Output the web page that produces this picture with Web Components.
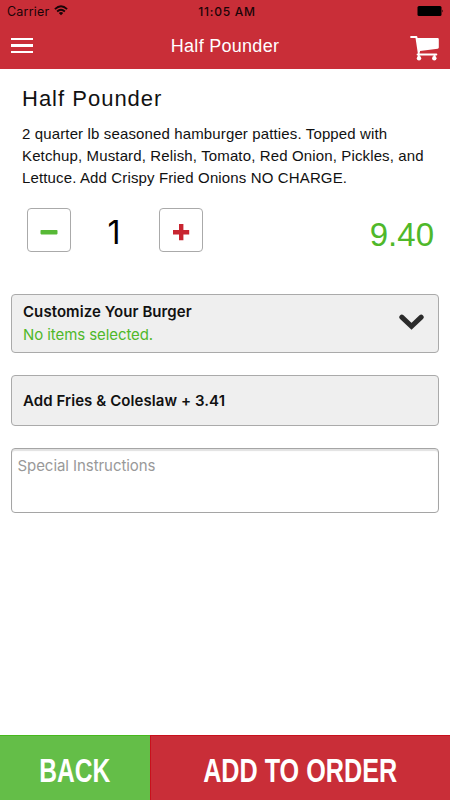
<!DOCTYPE html>
<html lang="en"><head><meta charset="utf-8"><title>Half Pounder</title>
<style>html,body{margin:0;height:100%;background:#fff}</style></head>
<body>
<order-screen></order-screen>
<script>
const define = (name, html) => customElements.define(name, class extends HTMLElement {
  constructor() {
    super();
    this.attachShadow({ mode: 'open' }).innerHTML = html;
  }
});

define('status-bar', `<style>
:host{display:grid;grid-template-columns:1fr auto 1fr;align-items:center;height:22px;padding:1px 6px 0 7px;box-sizing:border-box;font:12.5px/20px Inter,sans-serif;color:#190407}
.left{display:flex;align-items:center;gap:5px;letter-spacing:.2px}
.time{font-weight:500;font-size:12px;letter-spacing:.75px;padding-left:3px}
.left svg{margin-top:-2px}
.bat{justify-self:end;margin-top:-1px}
svg{display:block}
</style>
<div class="left"><span>Carrier</span>
<svg width="14" height="11" viewBox="0 0 14 11" fill="none" stroke="#190407" stroke-width="1.8"><path d="M.9 4.1Q7-1.6 13.1 4.1M3.1 6.5Q7 2.9 10.9 6.5"/><path d="M4.8 8Q7 6.1 9.2 8L7 10.3Z" fill="#190407" stroke="none"/></svg></div>
<span class="time">11:05 AM</span>
<svg class="bat" width="27" height="12" viewBox="0 0 27 12"><rect x=".5" y="1" width="24" height="10" rx="1.5" fill="#000"/><path d="M25.3 4.4q1.5 1.4 0 3z" fill="#000"/></svg>`);

define('nav-bar', `<style>
:host{display:grid;grid-template-columns:1fr auto 1fr;align-items:center;height:47px;padding:0 11px;color:#fff;font:18px/24px "Liberation Sans",sans-serif;letter-spacing:.28px}
.menu{display:grid;gap:4.4px;width:22px}
.menu i{height:2.2px;background:#fff}
.cart{justify-self:end;margin-top:4px}
svg{display:block}
</style>
<div class="menu"><i></i><i></i><i></i></div>
<slot></slot>
<svg class="cart" width="29" height="26" viewBox="0 0 29 26"><path d="M1.1 2.1H6.4L8.8 18.2" fill="none" stroke="#fff" stroke-width="2" stroke-linecap="round" stroke-linejoin="round"/><path d="M6.6 3.1H27.7Q28.8 3.1 28.8 4.2V12.6Q28.8 13.6 27.7 13.8L10 16.1V17.1H8.6Z" fill="#fff"/><path d="M7.6 19.5H26.3" fill="none" stroke="#fff" stroke-width="2" stroke-linecap="round"/><path d="M8.8 20v3M24.5 20v3" stroke="#fff" stroke-width="1.8"/><circle cx="9" cy="23.3" r="2.2" fill="#fff"/><circle cx="24.3" cy="23.3" r="2.2" fill="#fff"/></svg>`);

define('item-info', `<style>
:host{display:block;padding:17px 20px 0 22px;font-family:"Liberation Sans",sans-serif;color:#111}
h1{margin:0;font-weight:400;font-size:22px;line-height:26px;letter-spacing:1px}
p{margin:11px 0 0;font-size:15px;line-height:21.8px;letter-spacing:.135px;white-space:nowrap}
</style><h1><slot name="title"></slot></h1>
<p>2 quarter lb seasoned hamburger patties. Topped with<br>Ketchup, Mustard, Relish, Tomato, Red Onion, Pickles, and<br>Lettuce. Add Crispy Fried Onions NO CHARGE.</p>`);

define('step-button', `<style>
:host{display:grid;place-items:center;width:44px;height:44px;box-sizing:border-box;border:1px solid #aaa;border-radius:4px;background:#fff}
</style><slot></slot>`);

define('quantity-row', `<style>
:host{display:flex;align-items:center;padding:0 16px 0 27px;height:44px;margin-top:19.6px}
.n{box-sizing:border-box;width:88px;padding:7px 2px 0 0;text-align:center;font:32px/44px Inter,sans-serif;color:#000}
.price{margin-left:auto;font:33px/44px "Liberation Sans",sans-serif;color:#4fb82a;padding-top:11px}
svg{display:block;margin-top:4px}
</style>
<step-button><svg width="18" height="18"><rect x=".5" y="7" width="17" height="4.4" rx=".8" fill="#57b936"/></svg></step-button>
<span class="n">1</span>
<step-button><svg width="18" height="18"><path d="M7 1h4.4v6H17.2v4.4H11.4v5.8H7V11.4H1V7H7Z" fill="#c82530"/></svg></step-button>
<span class="price">9.40</span>`);

define('option-card', `<style>
:host{display:flex;align-items:center;justify-content:space-between;box-sizing:border-box;margin:0 11px;padding:0 14px 0 11px;border:1px solid #aaa;border-radius:4px;background:#efefef;font:15px/22.6px Inter,sans-serif;color:#111}
b{display:block;font-weight:600;letter-spacing:.07px}
::slotted([slot=note]){display:block;color:#4fb82a;letter-spacing:-.08px}
</style><div><b><slot></slot></b><slot name="note"></slot></div><slot name="icon"></slot>`);

define('instructions-box', `<style>
:host{display:block;box-sizing:border-box;height:65px;margin:22px 11px 0;padding:6px 5.5px;border:1px solid #a5a5a5;border-radius:4px;box-shadow:inset 0 2px 1px #e2e2e2;background:#fff;font:15px/22px Inter,sans-serif;letter-spacing:-.06px;color:#999}
</style><slot></slot>`);

define('action-button', `<style>
:host{display:grid;place-items:center;box-sizing:border-box;padding-top:5px;color:#fff;font:bold 33px/40px "Liberation Sans",sans-serif}
span{white-space:nowrap;transform:scaleX(var(--squeeze,.745))}
</style><span><slot></slot></span>`);

define('order-screen', `<style>
:host{display:flex;flex-direction:column;width:450px;height:800px;overflow:hidden;background:#fff}
header{background:#c92e38;height:69px}
footer{display:grid;grid-template-columns:150px 300px;height:65px;margin-top:auto}
.back{background:#64be48;border-top:1px solid #46b81c}
.add{background:#c92e38;border-top:1px solid #c8101c;border-left:1px solid #c8101c;--squeeze:.763}
.customize{height:59px;margin-top:42.4px}
.fries{height:51px;margin-top:22px}
</style>
<header><status-bar></status-bar><nav-bar><span>Half Pounder</span></nav-bar></header>
<item-info><span slot="title">Half Pounder</span></item-info>
<quantity-row></quantity-row>
<option-card class="customize">Customize Your Burger<span slot="note">No items selected.</span><svg slot="icon" width="25" height="17" viewBox="0 0 25 17" style="margin-top:-3px"><path d="M2.8 3.1 12.5 12.3 22.2 3.1" fill="none" stroke="#2b2b2b" stroke-width="5" stroke-linecap="round"/></svg></option-card>
<option-card class="fries">Add Fries &amp; Coleslaw + 3.41</option-card>
<instructions-box>Special Instructions</instructions-box>
<footer><action-button class="back">BACK</action-button><action-button class="add">ADD TO ORDER</action-button></footer>`);
</script>
</body></html>
